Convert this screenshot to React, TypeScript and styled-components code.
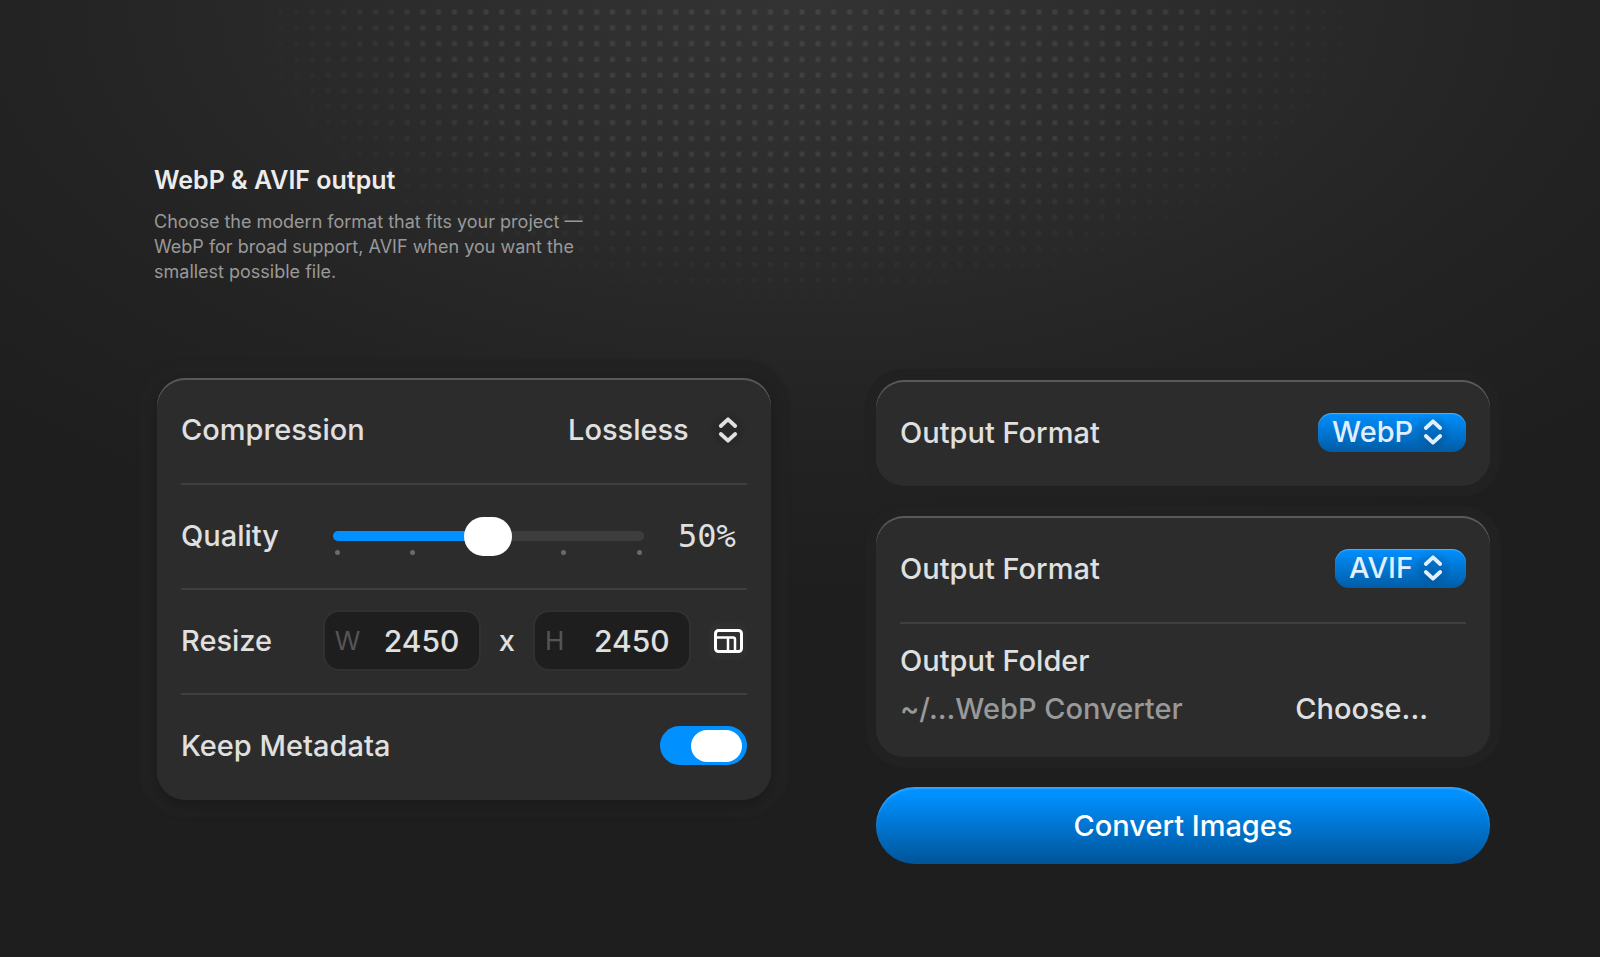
import React, { useId, useState } from "react";
import styled, { createGlobalStyle } from "styled-components";

const GlobalStyle = createGlobalStyle`
  * { box-sizing: border-box; }
  body {
    margin: 0;
    background: #1e1e1e;
    color: #e0e0e0;
    font-family: Inter, "Liberation Sans", sans-serif;
    -webkit-font-smoothing: antialiased;
  }
  button, input, select { font: inherit; color: inherit; margin: 0; }
`;

const Page = styled.main`
  position: relative;
  min-height: 100vh;
  padding-bottom: 90px;
  background: radial-gradient(
    ellipse 70% 63% at 50% 0,
    #333 0%,
    #303030 16%,
    #2c2c2c 35%,
    #282828 50%,
    #232323 70%,
    #1e1e1e 100%
  );
`;

const DotField = styled.svg`
  position: absolute;
  top: 0;
  left: 0;
  width: 100%;
  height: 340px;
`;

const Intro = styled.header`
  position: relative;
  padding: 164px 24px 0 154px;
`;

const Title = styled.h1`
  margin: 0;
  font-size: 25px;
  line-height: 32px;
  font-weight: 600;
  color: #ececec;
`;

const Lead = styled.p`
  margin: 13px 0 0;
  max-width: 440px;
  font-size: 18px;
  line-height: 25px;
  color: #999;
`;

const Panels = styled.div`
  position: relative;
  display: grid;
  grid-template-columns: 1fr 1fr;
  align-items: start;
  gap: 105px;
  padding: 94px 110px 0 157px;
`;

const Stack = styled.div`
  display: flex;
  flex-direction: column;
  gap: 30px;
  padding-top: 2px;
`;

const Card = styled.section<{ $raised?: boolean }>`
  padding: 0 24px ${(p) => (p.$raised ? 2 : 0)}px;
  border-radius: 28px;
  background: #2c2c2c;
  box-shadow: inset 0 2px 0 #595959,
    ${(p) =>
      p.$raised
        ? "0 8px 14px rgba(0, 0, 0, 0.2), 0 0 3px 18px #212121"
        : "0 0 1px 11px #212121"};
`;

const Row = styled.div`
  display: flex;
  align-items: center;
  justify-content: space-between;
  height: 106px;
  padding-bottom: 2px;
  font-size: 29px;
  font-weight: 500;
  & + & {
    border-top: 2px solid #3f3f3f;
  }
`;

const SettingRow = styled(Row)`
  height: 105px;
`;

const Label = styled.label`
  white-space: nowrap;
`;

const SelectBox = styled.span<{ $filled?: boolean }>`
  position: relative;
  display: inline-flex;
  height: 39px;
  border-radius: 14px;
  ${(p) =>
    p.$filled &&
    `background: linear-gradient(#0090ff, #005ca6);
     box-shadow: inset 0 1px 1px rgba(255, 255, 255, 0.3);
     color: #e2efff;`}
`;

const Select = styled.select<{ $filled?: boolean }>`
  appearance: none;
  height: 39px;
  padding: 0 ${(p) => (p.$filled ? 52 : 58)}px 0 14px;
  border: 0;
  border-radius: 14px;
  background: transparent;
  line-height: 38px;
  option { background: #2c2c2c; color: #e0e0e0; }
`;

const Chevrons = styled.span<{ $filled?: boolean }>`
  position: absolute;
  top: 0;
  right: ${(p) => (p.$filled ? 14 : 0)}px;
  display: grid;
  place-items: center;
  width: 38px;
  height: 39px;
  border-radius: 50%;
  background: radial-gradient(circle, rgba(0, 0, 0, 0.1) 40%, transparent 72%);
  pointer-events: none;
`;

const Slider = styled.div`
  flex: 1;
  display: grid;
  align-items: center;
  margin: 0 34px 0 54px;
`;

const Range = styled.input`
  grid-area: 1 / 1;
  z-index: 1;
  appearance: none;
  width: 100%;
  height: 40px;
  background: transparent;
  &::-webkit-slider-runnable-track {
    height: 10px;
    border-radius: 5px;
    background: linear-gradient(90deg, #0090ff 50%, #3d3d3d 50%);
  }
  &::-webkit-slider-thumb {
    appearance: none;
    width: 48px;
    height: 39px;
    margin-top: -14px;
    border-radius: 20px;
    background: #fff;
  }
`;

const Ticks = styled.div`
  grid-area: 1 / 1;
  display: flex;
  justify-content: space-between;
  padding: 33px 2px 0;
`;

const Tick = styled.i`
  width: 5px;
  height: 5px;
  border-radius: 50%;
  background: #6a6a6a;
`;

const Percent = styled.output`
  width: 69px;
  font-family: "DejaVu Sans Mono", monospace;
  font-size: 32px;
  font-weight: 400;
`;

const Sizes = styled.div`
  display: flex;
  align-items: center;
  gap: 18px;
`;

const SizeField = styled.label`
  display: flex;
  align-items: center;
  width: 158px;
  height: 61px;
  padding: 0 10px;
  border: 2px solid #313131;
  border-radius: 16px;
  background: #1e1e1e;
`;

const SizeKey = styled.span`
  width: 49px;
  font-size: 26px;
  font-weight: 400;
  color: #555;
`;

const SizeInput = styled.input`
  flex: 1;
  min-width: 0;
  padding: 0;
  border: 0;
  background: transparent;
  font-size: 30px;
  outline: 0;
`;

const IconButton = styled.button`
  display: grid;
  place-items: center;
  width: 38px;
  height: 38px;
  padding: 0;
  border: 0;
  border-radius: 10px;
  background: #2f2f2f;
  color: #fff;
`;

const Switch = styled.input`
  appearance: none;
  display: flex;
  align-items: center;
  width: 87px;
  height: 39px;
  padding: 0 5px;
  border-radius: 20px;
  background: #4a4a4a;
  &::before {
    content: "";
    width: 51px;
    height: 32px;
    border-radius: 16px;
    background: #fff;
  }
  &:checked {
    justify-content: flex-end;
    background: #0090ff;
  }
`;

const Folder = styled.div`
  display: flex;
  align-items: flex-end;
  justify-content: space-between;
  height: 135px;
  padding: 0 38px 24px 0;
  border-top: 2px solid #3f3f3f;
  font-size: 29px;
  line-height: 48px;
  font-weight: 500;
`;

const FolderPath = styled.div`
  color: #999;
`;

const TextButton = styled.button`
  padding: 0;
  border: 0;
  background: none;
`;

const ConvertButton = styled.button`
  height: 77px;
  border: 0;
  border-radius: 39px;
  background: linear-gradient(#0090ff 10%, #005498);
  box-shadow: inset 0 2px 2px rgba(255, 255, 255, 0.2);
  color: #fff;
  font-size: 29px;
  font-weight: 500;
`;

function DropDown({ id, options, filled }: { id: string; options: string[]; filled?: boolean }) {
  return (
    <SelectBox $filled={filled}>
      <Select id={id} $filled={filled}>
        {options.map((o) => (
          <option key={o}>{o}</option>
        ))}
      </Select>
      <Chevrons $filled={filled}>
        <svg width="20" height="28" viewBox="0 0 20 28" fill="none" stroke="currentColor" strokeWidth="3.8" strokeLinecap="round" strokeLinejoin="round" aria-hidden="true">
          <path d="M2.800 10 10 3.300l7.200 6.700M2.800 18l7.200 6.700 7.200-6.700" />
        </svg>
      </Chevrons>
    </SelectBox>
  );
}

function Dots() {
  return (
    <DotField viewBox="0 0 1600 340" preserveAspectRatio="xMidYMin slice" aria-hidden="true">
      <defs>
        <pattern id="dot" width="79" height="79" patternUnits="userSpaceOnUse" patternTransform="translate(4.2 4.100) scale(0.2)">
          <rect x="27" y="27" width="25" height="25" rx="3" fill="#fff" />
        </pattern>
        <radialGradient id="fade" gradientUnits="userSpaceOnUse" cx="0" cy="0" r="1" gradientTransform="translate(806 10) scale(570 305)">
          <stop offset="0" stopColor="#fff" stopOpacity="0.08" />
          <stop offset="0.6" stopColor="#fff" stopOpacity="0.08" />
          <stop offset="1" stopColor="#fff" stopOpacity="0" />
        </radialGradient>
        <mask id="spot">
          <rect width="1600" height="340" fill="url(#fade)" />
        </mask>
      </defs>
      <rect y="4" width="1600" height="336" fill="url(#dot)" mask="url(#spot)" />
    </DotField>
  );
}

export default function App() {
  const id = useId();
  const [keep, setKeep] = useState(true);
  return (
    <>
      <GlobalStyle />
      <Page>
        <Dots />
        <Intro>
          <Title>WebP &amp; AVIF output</Title>
          <Lead>
            Choose the modern format that fits your project — WebP for broad support, AVIF when you want the smallest
            possible file.
          </Lead>
        </Intro>
        <Panels>
          <Card $raised>
            <SettingRow>
              <Label htmlFor={id + "c"}>Compression</Label>
              <DropDown id={id + "c"} options={["Lossless"]} />
            </SettingRow>
            <SettingRow>
              <Label htmlFor={id + "q"}>Quality</Label>
              <Slider>
                <Ticks>
                  {[0, 25, 50, 75, 100].map((t) => (
                    <Tick key={t} />
                  ))}
                </Ticks>
                <Range id={id + "q"} type="range" min={0} max={100} defaultValue={50} />
              </Slider>
              <Percent htmlFor={id + "q"}>50%</Percent>
            </SettingRow>
            <SettingRow>
              <span>Resize</span>
              <Sizes>
                <SizeField>
                  <SizeKey>W</SizeKey>
                  <SizeInput defaultValue="2450" />
                </SizeField>
                <span>x</span>
                <SizeField>
                  <SizeKey>H</SizeKey>
                  <SizeInput defaultValue="2450" />
                </SizeField>
                <IconButton type="button" aria-label="Size presets">
                  <svg width="29" height="24" viewBox="0 0 29 24" fill="none" stroke="currentColor" strokeWidth="3" aria-hidden="true">
                    <rect x="1.500" y="1.500" width="26" height="21" rx="3" />
                    <path d="M2 8.500h17a2 2 0 0 1 2 2V22" strokeWidth="2.500" />
                    <path d="M14 9v13" strokeWidth="2.500" />
                  </svg>
                </IconButton>
              </Sizes>
            </SettingRow>
            <SettingRow>
              <Label htmlFor={id + "k"}>Keep Metadata</Label>
              <Switch id={id + "k"} type="checkbox" role="switch" checked={keep} onChange={(e) => setKeep(e.target.checked)} />
            </SettingRow>
          </Card>
          <Stack>
            <Card>
              <Row>
                <Label htmlFor={id + "w"}>Output Format</Label>
                <DropDown id={id + "w"} options={["WebP"]} filled />
              </Row>
            </Card>
            <Card>
              <Row>
                <Label htmlFor={id + "a"}>Output Format</Label>
                <DropDown id={id + "a"} options={["AVIF"]} filled />
              </Row>
              <Folder>
                <div>
                  <div>Output Folder</div>
                  <FolderPath>~/...WebP Converter</FolderPath>
                </div>
                <TextButton type="button">Choose...</TextButton>
              </Folder>
            </Card>
            <ConvertButton type="button">Convert Images</ConvertButton>
          </Stack>
        </Panels>
      </Page>
    </>
  );
}
